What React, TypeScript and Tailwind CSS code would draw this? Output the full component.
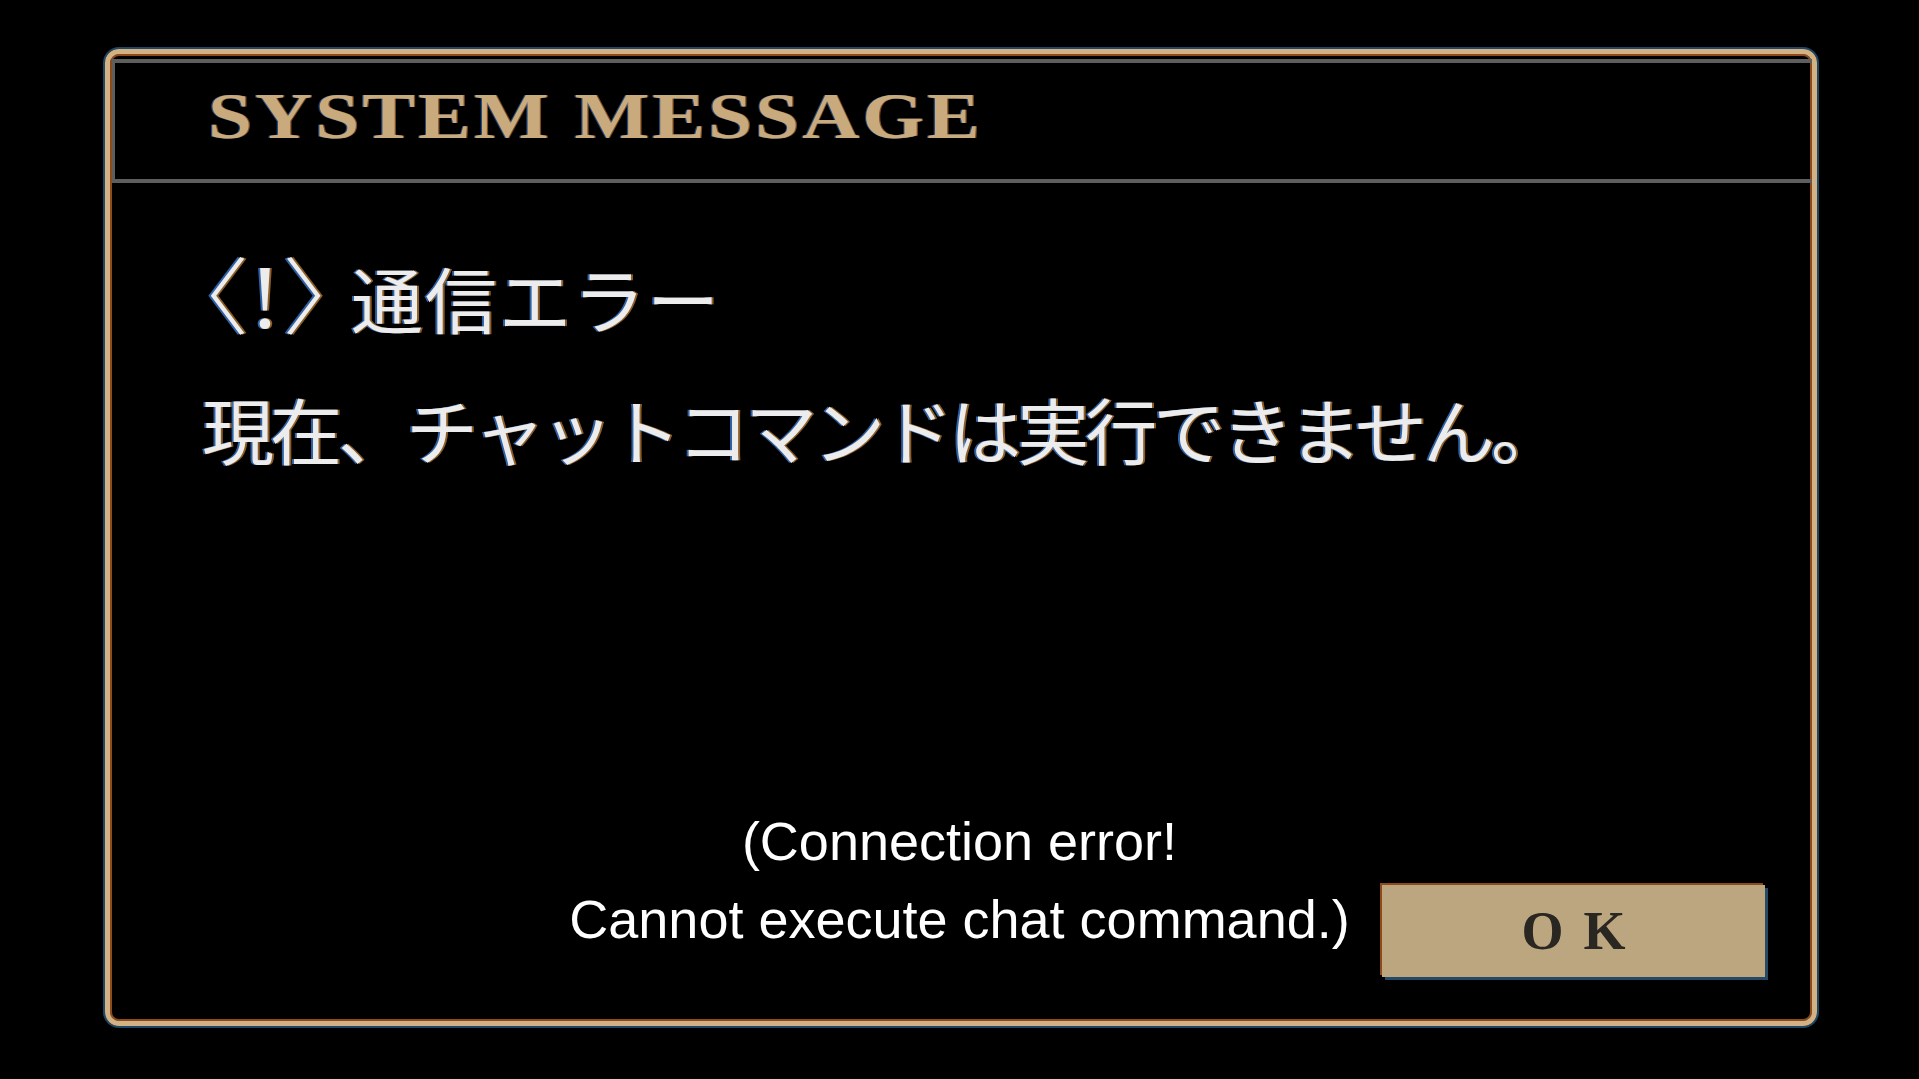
export default function App() {
  const glow =
    '[text-shadow:-2px_0_rgba(70,150,255,0.65),2px_0_rgba(255,170,70,0.55)]'

  return (
    <div className="relative w-full h-[1079px] bg-black pt-[49px] pl-[105px] overflow-hidden">
      {/* dialog frame */}
      <div className="w-[1712px] h-[977px] flex flex-col border-[5px] border-[#d2b285] rounded-[14px] shadow-[0_0_0_2px_#1d4766,inset_0_0_0_2px_#8f4a1c]">
        <div className="mt-[5px] ml-[2px] h-[124px] flex items-start border-t-[4px] border-l-[3px] border-b-[4px] border-[#5e5e5e] pt-[20px] pl-[93px]">
          <h1 className="font-['Liberation_Serif',serif] font-bold text-[66px] leading-none tracking-[2.5px] text-[#c8aa7c] origin-left scale-x-[1.2] [text-shadow:-1px_0_rgba(70,150,255,0.5),1px_0_rgba(255,150,60,0.5)]">
            SYSTEM MESSAGE
          </h1>
        </div>

        <div className="flex-1 flex flex-col pt-[78px] pl-[92px] pr-[47px] pb-[44px]">
          <p
            className={`h-[72px] font-['Noto_Sans_CJK_JP','Noto_Sans',sans-serif] text-[72px] leading-none text-[#ececec] whitespace-nowrap ${glow}`}
          >
            <span className="inline-block -ml-[40px] leading-[0] text-[84px] font-light scale-x-[1.15] origin-[64px_50%]">〈</span>
            <span className="inline-block ml-[4px] w-[30px] text-center leading-[0] font-['Liberation_Serif',serif] text-[90px]">!</span>
            <span className="inline-block ml-[5px] leading-[0] text-[84px] tracking-[-18px] font-light scale-x-[1.15] origin-[19px_50%]">〉</span>
            <span className="tracking-[2px]">通信エラー</span>
          </p>
          <p
            className={`mt-[59px] font-['Noto_Sans_CJK_JP','Noto_Sans',sans-serif] text-[72px] leading-none tracking-[-4px] text-[#ececec] whitespace-nowrap ${glow}`}
          >
            現在、チャットコマンドは実行できません。
          </p>

          <div className="mt-auto flex justify-end">
            <button className="w-[383px] h-[92px] flex items-center justify-center bg-[#bba680] shadow-[3px_3px_0_#244a66,-2px_-2px_0_#8f4a1c]">
              <span className="font-['Liberation_Serif',serif] font-bold text-[54px] leading-none tracking-[20px] pl-[20px] text-[#2a2622]">
                OK
              </span>
            </button>
          </div>
        </div>
      </div>

      {/* subtitle overlay */}
      <div className="absolute left-0 right-0 top-[802px] text-center font-['Liberation_Sans',Arial,sans-serif] text-[54px] leading-[78px] text-white">
        <div>(Connection error!</div>
        <div>Cannot execute chat command.)</div>
      </div>
    </div>
  )
}
